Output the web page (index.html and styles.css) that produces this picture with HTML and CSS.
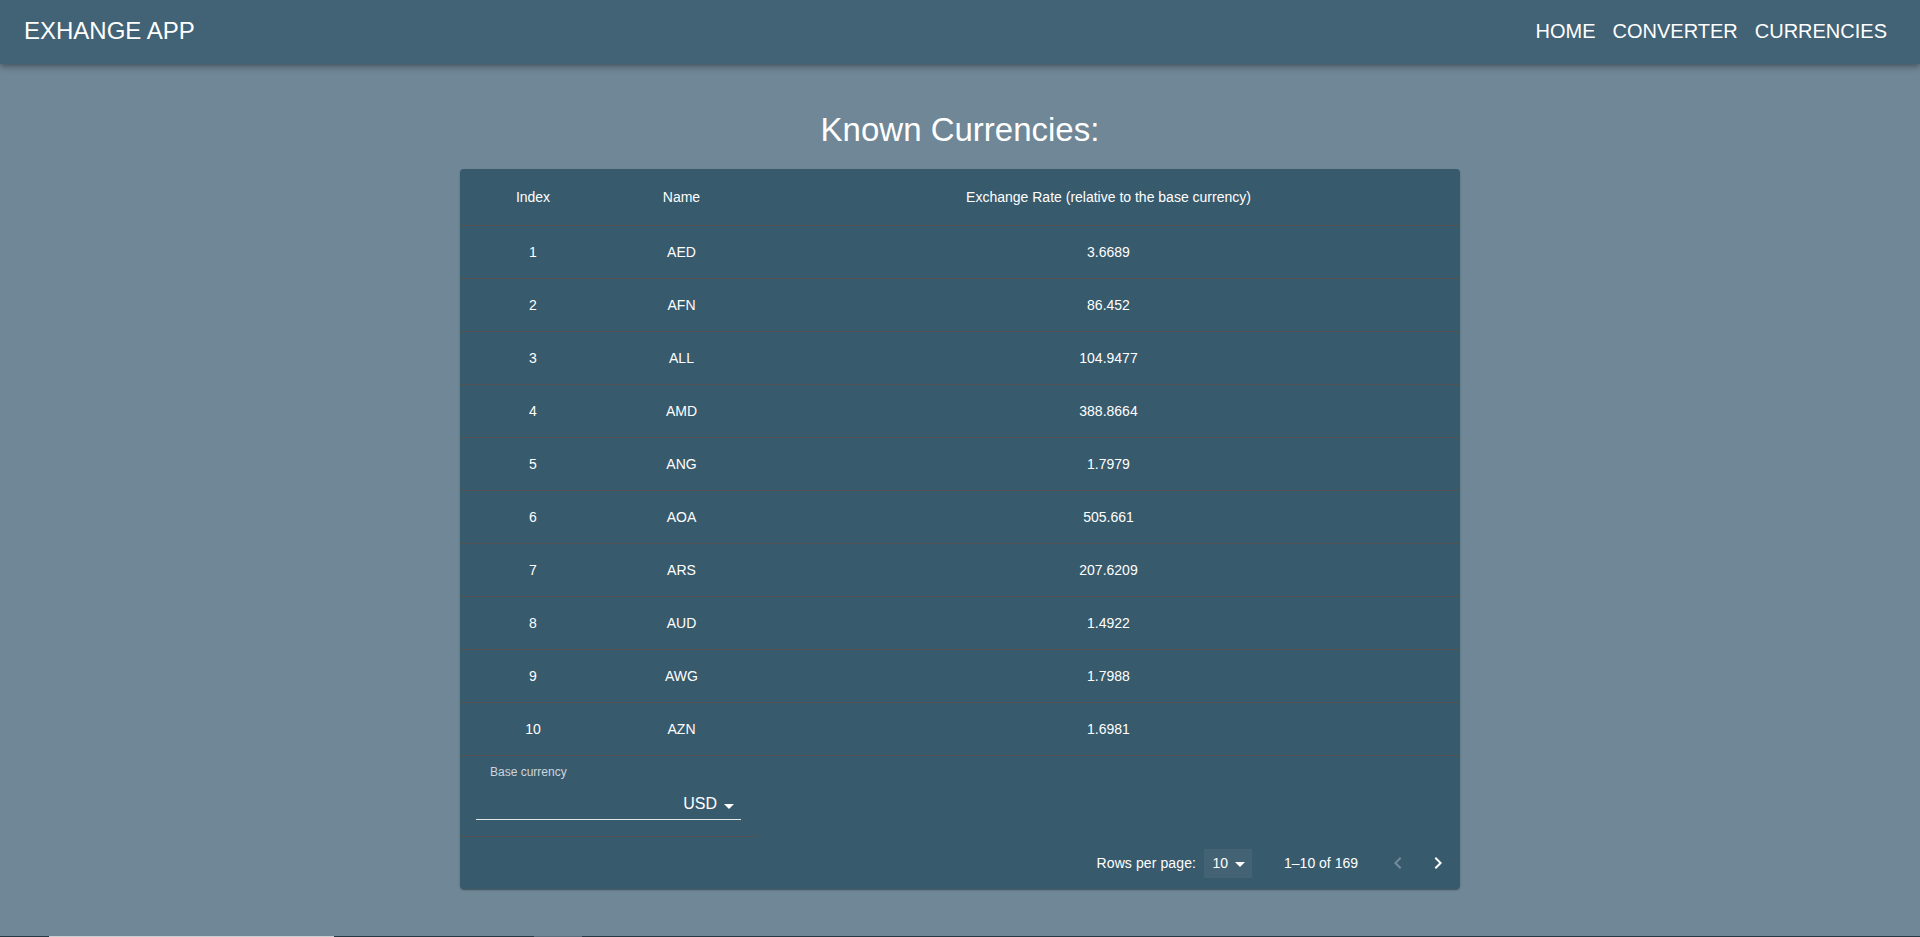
FILE: index.html
```html
<!DOCTYPE html>
<html lang="en">
<head>
<meta charset="utf-8">
<title>Exhange App</title>
<link rel="stylesheet" href="styles.css">
</head>
<body>
<header class="appbar">
  <div class="brand">EXHANGE APP</div>
  <nav class="nav">
    <a class="nav-link" href="#">HOME</a>
    <a class="nav-link" href="#">CONVERTER</a>
    <a class="nav-link" href="#">CURRENCIES</a>
  </nav>
</header>
<main class="main">
  <h1 class="title">Known Currencies:</h1>
  <section class="card">
    <table class="table">
      <colgroup>
        <col class="col-index">
        <col class="col-name">
        <col class="col-rate">
      </colgroup>
      <thead>
        <tr>
          <th>Index</th>
          <th>Name</th>
          <th>Exchange Rate (relative to the base currency)</th>
        </tr>
      </thead>
      <tbody>
        <tr><td>1</td><td>AED</td><td>3.6689</td></tr>
        <tr><td>2</td><td>AFN</td><td>86.452</td></tr>
        <tr><td>3</td><td>ALL</td><td>104.9477</td></tr>
        <tr><td>4</td><td>AMD</td><td>388.8664</td></tr>
        <tr><td>5</td><td>ANG</td><td>1.7979</td></tr>
        <tr><td>6</td><td>AOA</td><td>505.661</td></tr>
        <tr><td>7</td><td>ARS</td><td>207.6209</td></tr>
        <tr><td>8</td><td>AUD</td><td>1.4922</td></tr>
        <tr><td>9</td><td>AWG</td><td>1.7988</td></tr>
        <tr><td>10</td><td>AZN</td><td>1.6981</td></tr>
        <tr class="form-row">
          <td colspan="2" class="form-cell">
            <div class="field">
              <div class="field-label">Base currency</div>
              <div class="field-input">
                <span class="field-value">USD</span>
                <svg class="drop-icon" viewBox="0 0 24 24" width="24" height="24"><path d="M7 10l5 5 5-5z" fill="currentColor"/></svg>
              </div>
            </div>
          </td>
          <td class="empty-cell"></td>
        </tr>
      </tbody>
    </table>
    <div class="pagination">
      <span class="pg-label">Rows per page:</span>
      <div class="pg-select">
        <span>10</span>
        <svg class="pg-drop" viewBox="0 0 24 24" width="24" height="24"><path d="M7 10l5 5 5-5z" fill="currentColor"/></svg>
      </div>
      <span class="pg-rows">1–10 of 169</span>
      <div class="pg-actions">
        <button class="pg-btn disabled" type="button" aria-label="previous">
          <svg viewBox="0 0 24 24" width="24" height="24"><path d="M15.41 16.59 10.83 12l4.58-4.59L14 6l-6 6 6 6 1.41-1.41z" fill="currentColor"/></svg>
        </button>
        <button class="pg-btn" type="button" aria-label="next">
          <svg viewBox="0 0 24 24" width="24" height="24"><path d="M8.59 16.59 13.17 12 8.59 7.41 10 6l6 6-6 6-1.41-1.41z" fill="currentColor"/></svg>
        </button>
      </div>
    </div>
  </section>
</main>
<div class="bottom-strip">
  <span class="strip-gap-a"></span>
  <span class="strip-light"></span>
  <span class="strip-gap-b"></span>
  <span class="strip-mid"></span>
</div>
</body>
</html>
```
FILE: styles.css
```css
html, body {
  margin: 0;
  padding: 0;
  height: 937px;
  overflow: hidden;
}
body {
  background: #6f8796;
  font-family: "Liberation Sans", Arial, sans-serif;
  color: #ffffff;
  display: flex;
  flex-direction: column;
}
.appbar {
  height: 64px;
  box-sizing: border-box;
  flex: 0 0 64px;
  background: #426275;
  display: flex;
  align-items: center;
  justify-content: space-between;
  padding: 0 33px 3px 24px;
  box-shadow: 0 2px 4px -1px rgba(0,0,0,.2), 0 4px 5px 0 rgba(0,0,0,.14), 0 1px 10px 0 rgba(0,0,0,.12);
  position: relative;
  z-index: 2;
}
.brand {
  font-size: 24px;
  line-height: 28px;
}
.nav {
  display: flex;
  gap: 17px;
}
.nav-link {
  color: #ffffff;
  text-decoration: none;
  font-size: 20px;
  line-height: 24px;
}
.main {
  flex: 1 1 auto;
  padding-top: 46px;
}
.title {
  margin: 0 0 19px;
  font-size: 33px;
  line-height: 40px;
  font-weight: 400;
  text-align: center;
}
.card {
  width: 1000px;
  margin: 0 auto;
  background: #385a6d;
  border-radius: 4px;
  box-shadow: 0 2px 1px -1px rgba(0,0,0,.2), 0 1px 1px 0 rgba(0,0,0,.14), 0 1px 3px 0 rgba(0,0,0,.12);
  overflow: hidden;
}
.table {
  width: 100%;
  border-collapse: collapse;
  table-layout: fixed;
}
.col-index { width: 146px; }
.col-name { width: 151px; }
.col-rate { width: 703px; }
.table th {
  font-weight: 400;
  font-size: 14px;
  line-height: 24px;
  padding: 16px;
  text-align: center;
  border-bottom: 1px solid #515151;
}
.table td {
  font-size: 14px;
  line-height: 20px;
  padding: 16px;
  text-align: center;
  border-bottom: 1px solid #515151;
}
.table td.form-cell {
  padding: 8px 16px 16px;
  text-align: left;
}
.table td.empty-cell {
  border-bottom: none;
}
.field-label {
  font-size: 12px;
  line-height: 16px;
  color: rgba(255,255,255,0.75);
  margin-left: 14px;
}
.field-input {
  position: relative;
  padding: 12px 24px 4px 0;
  line-height: 23px;
  font-size: 16px;
  text-align: right;
  border-bottom: 1px solid rgba(255,255,255,0.85);
}
.drop-icon {
  position: absolute;
  right: 0;
  top: 14px;
  color: #ffffff;
}
.pagination {
  height: 52px;
  display: flex;
  align-items: center;
  justify-content: flex-end;
  padding-right: 2px;
  font-size: 14px;
}
.pg-label {
  letter-spacing: 0.1px;
}
.pg-select {
  position: relative;
  height: 29px;
  line-height: 29px;
  width: 16px;
  padding: 0 24px 0 8px;
  margin: 0 32px 0 8px;
  text-align: right;
  background: rgba(255,255,255,0.06);
}
.pg-drop {
  position: absolute;
  right: 0;
  top: 3px;
}
.pg-actions {
  display: flex;
  margin-left: 20px;
}
.pg-btn {
  width: 40px;
  height: 40px;
  padding: 8px;
  border: none;
  background: transparent;
  color: #ffffff;
  display: flex;
  align-items: center;
  justify-content: center;
  border-radius: 50%;
}
.pg-btn.disabled {
  color: rgba(255,255,255,0.3);
}
.bottom-strip {
  flex: 0 0 1px;
  height: 1px;
  background: #263a46;
  display: flex;
}
.strip-gap-a { width: 49px; }
.strip-light { width: 285px; background: #c9ced1; }
.strip-gap-b { width: 200px; }
.strip-mid { width: 48px; background: #5a6f7b; }
```
